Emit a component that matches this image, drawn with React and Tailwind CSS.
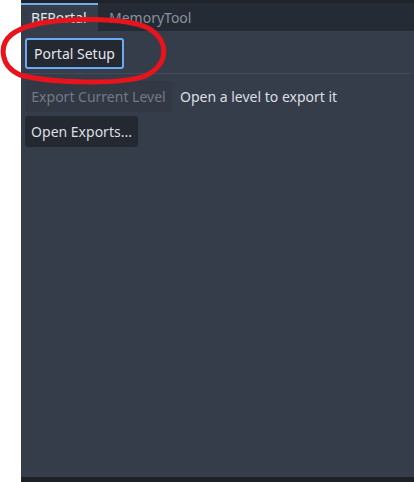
export default function App() {
  return (
    <div className="relative flex h-[482px] w-[414px] bg-white font-['Noto_Sans',sans-serif] text-[14px]">
      <div className="w-[21px] flex-none bg-white" />
      <div className="flex flex-1 flex-col bg-[#363d4a]">
        <div className="h-[3px] flex-none bg-[#1f2329]" />
        <div className="flex h-[28px] flex-none bg-[#252b35]">
          <div className="flex w-[77px] items-center border-t-2 border-[#70aef0] bg-[#363d4a] pl-[10px] pb-[2px] text-[#e4e6ea]">
            BFPortal
          </div>
          <div className="flex items-center pl-[11px] text-[#8b9099]">MemoryTool</div>
        </div>
        <div className="flex flex-1 flex-col px-[4px] pt-[7px]">
          <div>
            <button className="h-[31px] w-[99px] rounded-[3px] border-2 border-[#6aaaf0] bg-[#232831] text-[#e4e6ea]">
              Portal Setup
            </button>
          </div>
          <div className="mt-[4px] h-px bg-[#434a58]" />
          <div className="mt-[7px] flex items-center gap-[8px]">
            <button className="h-[31px] w-[147px] rounded-[3px] bg-[#323945] text-[#737a85]">
              Export Current Level
            </button>
            <span className="text-[#dcdee2]">Open a level to export it</span>
          </div>
          <div className="mt-[4px]">
            <button className="h-[31px] w-[113px] rounded-[3px] bg-[#232831] text-[#dcdee2]">
              Open Exports...
            </button>
          </div>
        </div>
        <div className="h-[5px] flex-none bg-[#1d2025]" />
      </div>
      <svg className="pointer-events-none absolute left-0 top-0" width="414" height="482">
        <path
          d="M 30 26 C 60 17, 125 17, 148 28 C 169 40, 170 64, 145 76 C 120 85, 50 83, 20 75 C 0 66, -1 45, 11 35 C 18 29, 28 25, 48 22"
          fill="none"
          stroke="#e8141c"
          strokeWidth="5"
          strokeLinecap="round"
        />
      </svg>
    </div>
  )
}
